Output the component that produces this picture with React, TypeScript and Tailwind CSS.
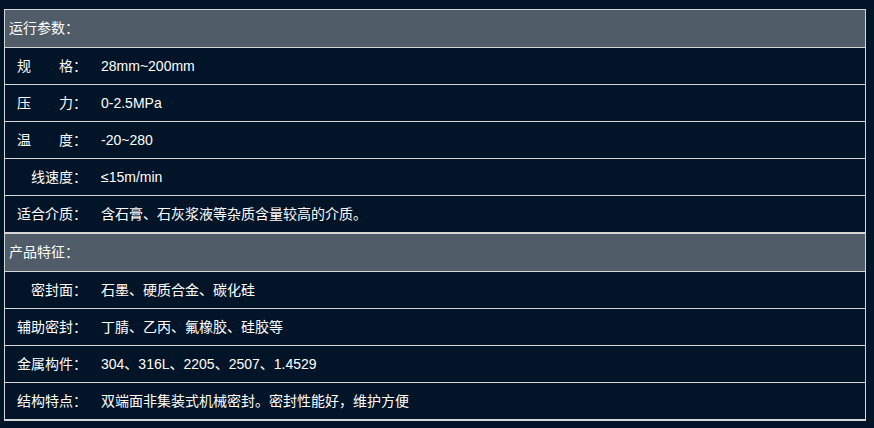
import React from 'react';

type Row = { label: React.ReactNode; value: string };

const font = { fontFamily: '"Liberation Sans", "Noto Sans CJK SC", sans-serif' };

const spaced = (a: string, b: string) => (
  <span className="inline-flex w-[70px] justify-between">
    <span>{a}</span>
    <span>{b}：</span>
  </span>
);

const sections: { title: string; rows: Row[] }[] = [
  {
    title: '运行参数：',
    rows: [
      { label: spaced('规', '格'), value: '28mm~200mm' },
      { label: spaced('压', '力'), value: '0-2.5MPa' },
      { label: spaced('温', '度'), value: '-20~280' },
      { label: '线速度：', value: '≤15m/min' },
      { label: '适合介质：', value: '含石膏、石灰浆液等杂质含量较高的介质。' },
    ],
  },
  {
    title: '产品特征：',
    rows: [
      { label: '密封面：', value: '石墨、硬质合金、碳化硅' },
      { label: '辅助密封：', value: '丁腈、乙丙、氟橡胶、硅胶等' },
      { label: '金属构件：', value: '304、316L、2205、2507、1.4529' },
      { label: '结构特点：', value: '双端面非集装式机械密封。密封性能好，维护方便' },
    ],
  },
];

export default function App() {
  return (
    <div className="w-[874px] h-[428px] bg-[#021428] pt-[9px] pl-[4px] text-[14px] text-white" style={font}>
      <div className="w-[862px]">
        {sections.map((s, i) => (
          <div key={i} className={`border border-[#d6d6d6] ${i === 1 ? 'border-b-2' : ''}`}>
            <div className="h-[38px] flex items-center pl-[4px] bg-[#505d69] border-b border-[#d6d6d6]">
              {s.title}
            </div>
            {s.rows.map((r, j) => {
              const last = j === s.rows.length - 1;
              return (
                <div
                  key={j}
                  className={`flex items-center ${last ? 'h-[36px]' : 'h-[37px] border-b border-[#d6d6d6]'}`}
                >
                  <div className="w-[82px] text-right">{r.label}</div>
                  <div className="pl-[14px]">{r.value}</div>
                </div>
              );
            })}
          </div>
        ))}
      </div>
    </div>
  );
}
